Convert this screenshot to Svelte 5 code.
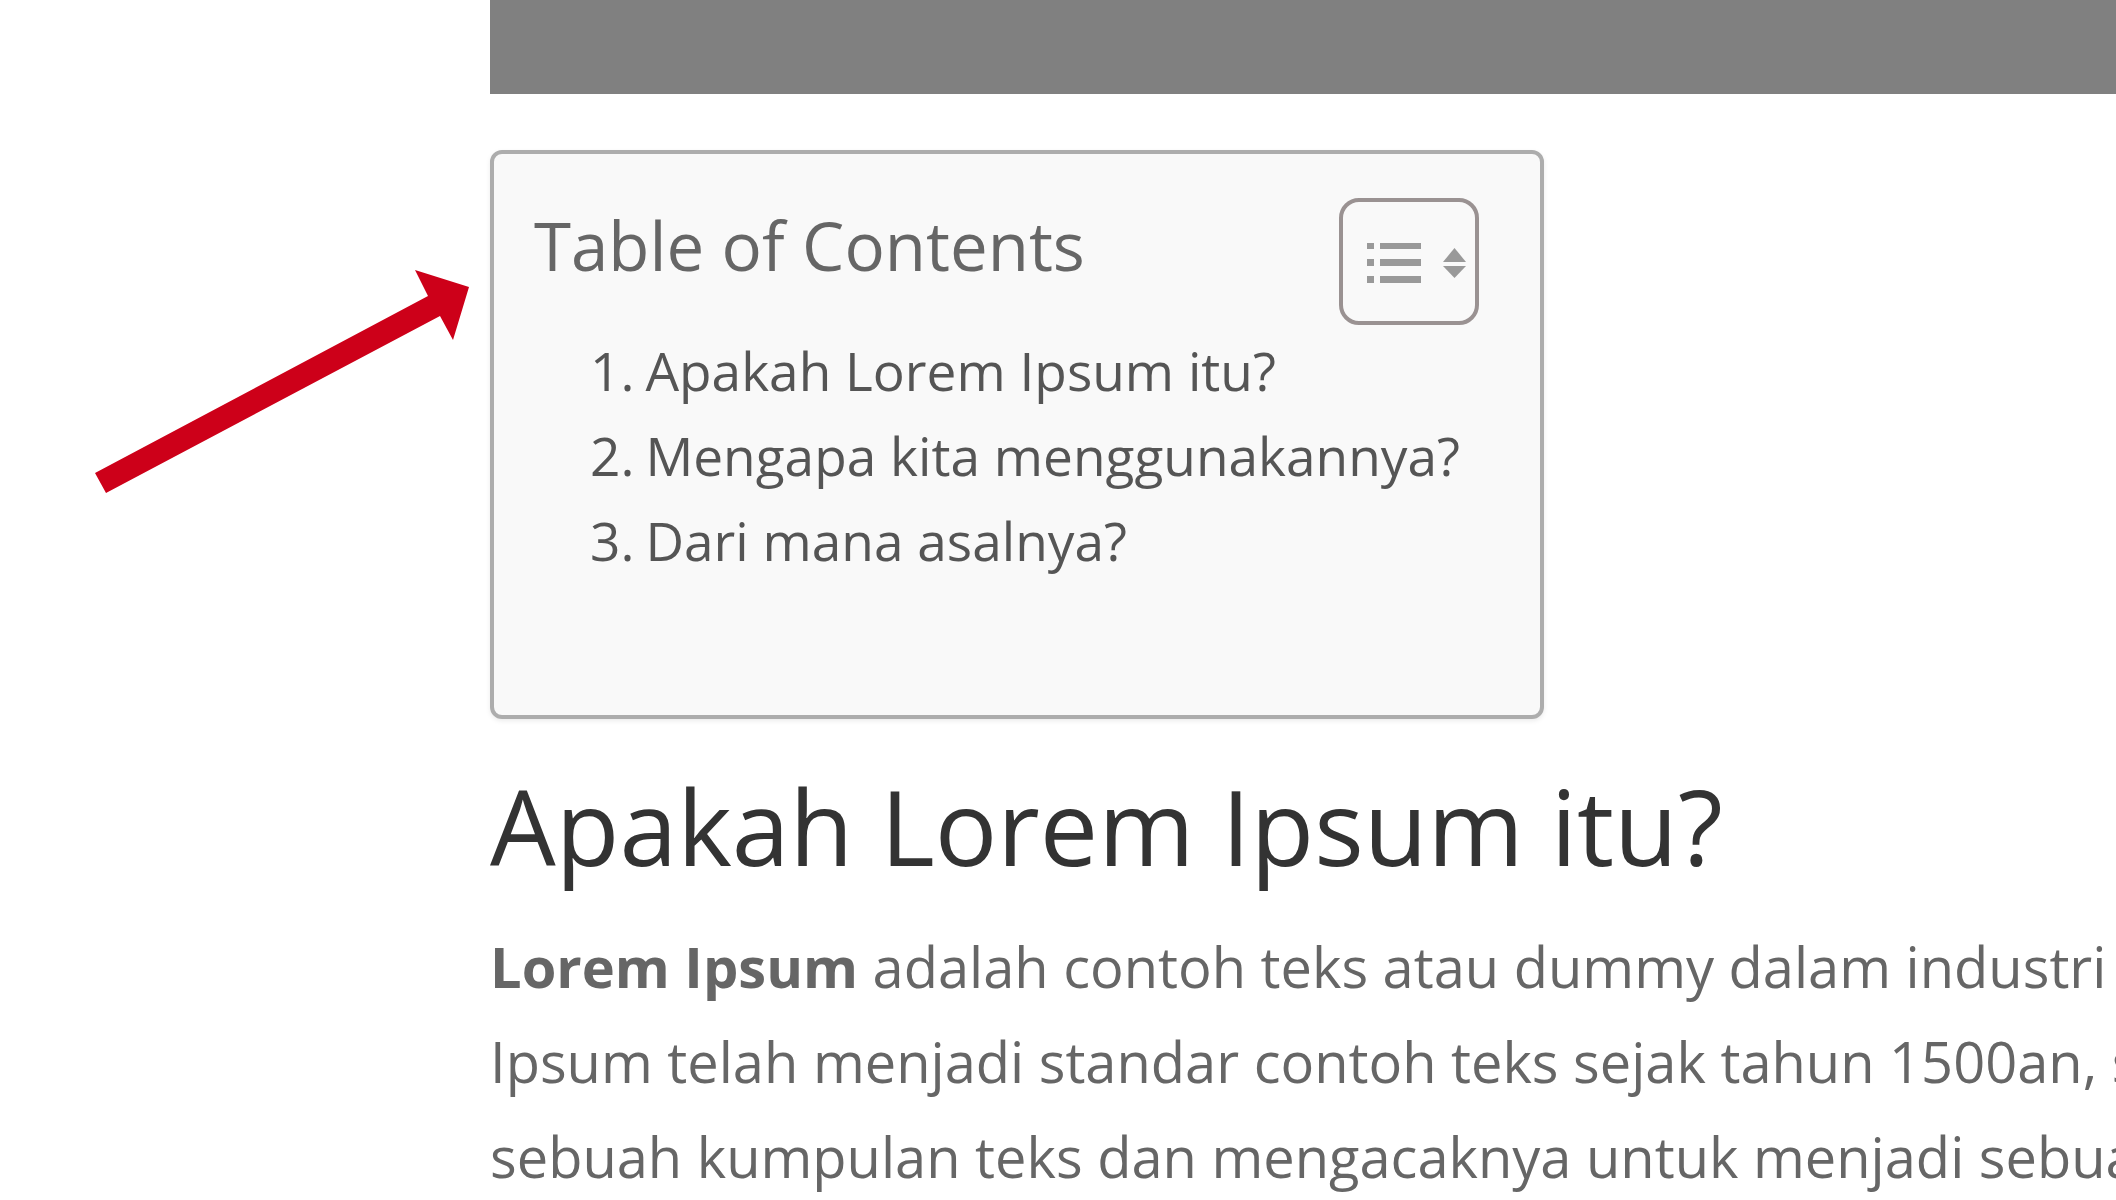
<script>
  const items = ['Apakah Lorem Ipsum itu?', 'Mengapa kita menggunakannya?', 'Dari mana asalnya?'];
</script>

<div class="page">
  <main class="content">
    <div class="banner"></div>

    <nav class="toc">
      <div class="toc-head">
        <p class="toc-title">Table of Contents</p>
        <button class="toc-toggle" aria-label="Toggle table of contents">
          <svg width="100" height="42" viewBox="0 0 100 42">
            <g fill="#999">
              <rect x="0" y="0" width="7" height="6" />
              <rect x="0" y="16" width="7" height="7" />
              <rect x="0" y="33" width="7" height="7" />
              <rect x="13" y="0" width="41" height="6" />
              <rect x="13" y="16" width="41" height="7" />
              <rect x="13" y="33" width="41" height="7" />
              <polygon points="76,19 87.5,5 99,19" />
              <polygon points="76,23 99,23 87.5,35" />
            </g>
          </svg>
        </button>
      </div>
      <ol class="toc-list">
        {#each items as item}
          <li>{item}</li>
        {/each}
      </ol>
    </nav>

    <h2>Apakah Lorem Ipsum itu?</h2>
    <p class="body-text">
      <strong>Lorem Ipsum</strong> adalah contoh teks atau dummy dalam industri percetakan dan penataan huruf<br />
      Ipsum telah menjadi standar contoh teks sejak tahun 1500an, saat seorang tukang cetak yang tidak dikenal<br />
      sebuah kumpulan teks dan mengacaknya untuk menjadi sebuah buku contoh huruf
    </p>
  </main>

  <svg class="arrow" width="400" height="240" viewBox="80 260 400 240">
    <polygon fill="#cd0019" points="95,473 428,296 415,270 469,287 453,340 440,316 106,493" />
  </svg>
</div>

<style>
  :global(body) {
    margin: 0;
    overflow: hidden;
  }

  .page {
    position: relative;
    width: 2116px;
    height: 1200px;
    overflow: hidden;
    background: #fff;
    font-family: "Open Sans", sans-serif;
  }

  .content {
    padding-left: 490px;
  }

  .banner {
    height: 94px;
    background: #808080;
  }

  .toc {
    box-sizing: border-box;
    width: 1054px;
    height: 569px;
    margin-top: 56px;
    padding: 35px 40px 0;
    background: #f9f9f9;
    border: 4px solid #adadad;
    border-radius: 12px;
    box-shadow: 0 2px 5px rgba(0, 0, 0, 0.08);
  }

  .toc-head {
    display: flex;
    justify-content: space-between;
    align-items: flex-start;
  }

  .toc-title {
    margin: 21px 0 0;
    font-size: 67.2px;
    line-height: 70px;
    color: #666;
  }

  .toc-toggle {
    box-sizing: border-box;
    display: flex;
    width: 140px;
    height: 127px;
    margin-top: 9px;
    margin-right: 21px;
    padding: 41px 0 0 24px;
    background: transparent;
    border: 4px solid #9a9292;
    border-radius: 20px;
  }

  .toc-list {
    margin: 3px 0 0;
    padding: 0 0 0 56px;
    list-style: none;
    counter-reset: toc;
    font-size: 53.2px;
    line-height: 85px;
    color: #555;
  }

  .toc-list li {
    counter-increment: toc;
    white-space: nowrap;
  }

  .toc-list li::before {
    content: counter(toc) ".";
    margin-right: 11px;
  }

  h2 {
    margin: 42px 0 0;
    font-size: 104px;
    font-weight: 400;
    line-height: 130px;
    color: #333;
  }

  .body-text {
    margin: 28px 0 0;
    font-size: 56px;
    line-height: 95px;
    color: #666;
    white-space: nowrap;
  }

  .arrow {
    position: absolute;
    left: 80px;
    top: 260px;
  }
</style>
